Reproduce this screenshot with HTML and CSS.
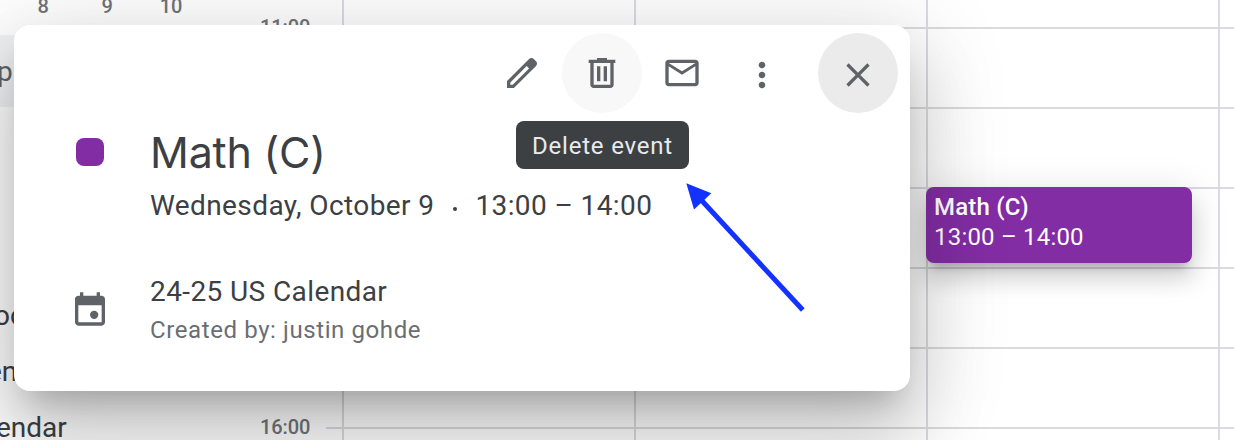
FILE: index.html
```html
<!DOCTYPE html>
<html lang="en">
<head>
<meta charset="utf-8">
<title>Calendar</title>
<link rel="stylesheet" href="styles.css">
</head>
<body>
<div class="app">
  <aside class="sidebar">
    <div class="mini-days"><span>8</span><span>9</span><span>10</span></div>
    <div class="search"><span class="tail">p</span></div>
    <ul class="calendars">
      <li><span class="tail tail-a">oo</span></li>
      <li><span class="tail tail-b">en</span></li>
      <li><span class="tail tail-c">endar</span></li>
    </ul>
  </aside>
  <div class="hours"><span>11:00</span><span class="last">16:00</span></div>
  <main class="grid">
    <div class="day"></div>
    <div class="day"></div>
    <div class="day">
      <div class="event"><strong>Math (C)</strong><span>13:00 – 14:00</span></div>
    </div>
    <div class="day"></div>
  </main>
</div>

<section class="popup">
  <header class="toolbar">
    <button class="btn" aria-label="Edit event"><svg viewBox="0 0 24 24"><path d="M20.41 4.94l-1.35-1.35c-.78-.78-2.05-.78-2.83 0L3 16.82V21h4.18L20.41 7.77c.79-.78.79-2.05 0-2.83zm-14 14.12L5 19v-1.36l9.82-9.82 1.41 1.41-9.82 9.83z"/></svg></button>
    <button class="btn hover" aria-label="Delete event"><svg viewBox="0 0 24 24"><path d="M15 4V3H9v1H4v2h1v13c0 1.1.9 2 2 2h10c1.1 0 2-.9 2-2V6h1V4h-5zm2 15H7V6h10v13zM9 8h2v9H9zm4 0h2v9h-2z"/></svg></button>
    <button class="btn" aria-label="Email guests"><svg viewBox="0 0 24 24"><path d="M22 6c0-1.1-.9-2-2-2H4c-1.1 0-2 .9-2 2v12c0 1.1.9 2 2 2h16c1.1 0 2-.9 2-2V6zm-2 0l-8 5-8-5h16zm0 12H4V8l8 5 8-5v10z"/></svg></button>
    <button class="btn low" aria-label="Options"><svg viewBox="0 0 24 24"><path d="M12 8c1.1 0 2-.9 2-2s-.9-2-2-2-2 .9-2 2 .9 2 2 2zm0 2c-1.1 0-2 .9-2 2s.9 2 2 2 2-.9 2-2-.9-2-2-2zm0 6c-1.1 0-2 .9-2 2s.9 2 2 2 2-.9 2-2-.9-2-2-2z"/></svg></button>
    <button class="btn low close" aria-label="Close"><svg viewBox="0 0 24 24"><path d="M19 6.41L17.59 5 12 10.59 6.41 5 5 6.41 10.59 12 5 17.59 6.41 19 12 13.41 17.59 19 19 17.59 13.41 12z"/></svg></button>
  </header>
  <div class="row summary">
    <div class="lead"><i class="swatch"></i></div>
    <div>
      <h1>Math (C)</h1>
      <p class="when"><span>Wednesday, October 9</span><i class="dot"></i><span>13:00 – 14:00</span></p>
    </div>
  </div>
  <div class="row source">
    <div class="lead"><svg viewBox="0 0 24 24"><path fill-rule="evenodd" d="M19 4h-1V2h-2v2H8V2H6v2H5c-1.1 0-2 .9-2 2v14c0 1.1.9 2 2 2h14c1.1 0 2-.9 2-2V6c0-1.1-.9-2-2-2zM5 9.7h14V20H5z"/><circle cx="14.5" cy="15.5" r="2.5"/></svg></div>
    <div>
      <p class="name">24-25 US Calendar</p>
      <p class="by">Created by: justin gohde</p>
    </div>
  </div>
</section>
<div class="tooltip"><span>Delete event</span></div>
<svg class="arrow" viewBox="0 0 130 140"><path d="M18 16.500L122.800 130"/><polygon points="6.300,3.300 31.300,13.200 14,29.500"/></svg>
</body>
</html>
```
FILE: styles.css
```css
* { box-sizing: border-box; margin: 0; padding: 0; }
body {
  width: 1234px; height: 440px; overflow: hidden; position: relative;
  background: #fff; color: #3c4043; font-family: Roboto, sans-serif;
}
.app { display: flex; width: 1234px; height: 440px; overflow: hidden; }
.sidebar { width: 240px; height: 440px; overflow: hidden; }
.mini-days {
  display: grid; grid-template-columns: repeat(3, 64px); padding-left: 11px; height: 35px;
  text-align: center; font-size: 20px; font-weight: 500; line-height: 12px; color: #70757a;
  letter-spacing: -.2px;
}
.search { height: 72px; background: #f1f3f4; display: flex; align-items: center; color: #5f6368; }
.search .tail { margin: 2px 0 0 -3px; }
.tail { font-size: 28px; line-height: 36px; white-space: nowrap; }
.calendars { list-style: none; padding-top: 181px; }
.calendars li { height: 56px; display: flex; align-items: center; }
.tail-a { margin-left: -6px; }
.tail-b { margin-left: -13px; }
.tail-c { margin-left: -4px; }
.hours {
  width: 102px; height: 440px; padding-top: 17px; display: flex; flex-direction: column; flex: none;
  font-size: 20px; font-weight: 500; line-height: 20px; color: #70757a; letter-spacing: -.1px;
  background: linear-gradient(#dadce0, #dadce0) 86px 427px / 16px 2px no-repeat;
}
.hours span { padding-left: 20px; }
.hours .last { margin-top: 380px; }
.grid {
  flex: 1; display: grid; grid-template-columns: repeat(4, 292px); height: 440px; overflow: hidden;
  background: repeating-linear-gradient(#dadae0 0 2px, transparent 2px 80px) 0 27px;
}
.day { border-left: 2px solid #dadae0; padding-top: 187px; }
.event {
  width: 266px; height: 76px; margin-left: -2px; padding: 5px 8px; border-radius: 8px;
  background: #832da4; color: #fff; font-size: 24px; line-height: 30px;
  box-shadow: 0 16px 20px 2px rgba(0,0,0,.1), 0 6px 36px 4px rgba(0,0,0,.1), 0 10px 10px -6px rgba(0,0,0,.2);
}
.event strong, .event span { display: block; }
.event strong { font-weight: 500; letter-spacing: .2px; }
.event span { letter-spacing: .2px; }
.popup {
  position: absolute; left: 14px; top: 25px; width: 896px; height: 366px;
  background: #fff; border-radius: 16px; padding: 8px 12px;
  box-shadow: 0 48px 76px 6px rgba(0,0,0,.14), 0 18px 92px 16px rgba(0,0,0,.12), 0 22px 30px -14px rgba(0,0,0,.2);
}
.toolbar { display: flex; justify-content: flex-end; }
.btn { width: 80px; height: 80px; border: 0; border-radius: 50%; background: none; display: flex; align-items: center; justify-content: center; }
.btn svg, .lead svg { width: 40px; height: 40px; fill: #5f6368; display: block; }
.low { padding-top: 4px; }
.hover { background: #f8f8f8; }
.close { background: #ebebeb; margin-left: 16px; }
.row { display: flex; }
.lead { width: 124px; flex: none; padding-left: 44px; }
.summary { padding-top: 11px; }
.swatch { display: block; width: 28px; height: 28px; border-radius: 8px; background: #832da4; margin: 14px 0 0 6px; }
h1 { font: 400 43px/56px Inter, sans-serif; letter-spacing: -.2px; }
.when { display: flex; align-items: center; font-size: 28px; line-height: 40px; letter-spacing: .4px; margin-top: 6px; margin-bottom: 46px; }
.dot { width: 4px; height: 4px; border-radius: 50%; background: #3c4043; margin: 5px 18px 0 19px; }
.source .lead svg { margin-top: 17px; }
.name { font-size: 28px; line-height: 40px; letter-spacing: .4px; }
.by { font-size: 24px; line-height: 36px; letter-spacing: .6px; color: #6a6e73; }
.tooltip {
  position: absolute; left: 516px; top: 121px; width: 173px; height: 48px; border-radius: 8px;
  background: #3c4043; color: #e8eaed; font-size: 24px; letter-spacing: .8px; padding-top: 2px;
  display: flex; align-items: center; justify-content: center; white-space: nowrap;
}
.arrow { position: absolute; left: 680px; top: 180px; width: 130px; height: 140px; fill: #1432ff; }
.arrow path { stroke: #1432ff; stroke-width: 5; }
```
